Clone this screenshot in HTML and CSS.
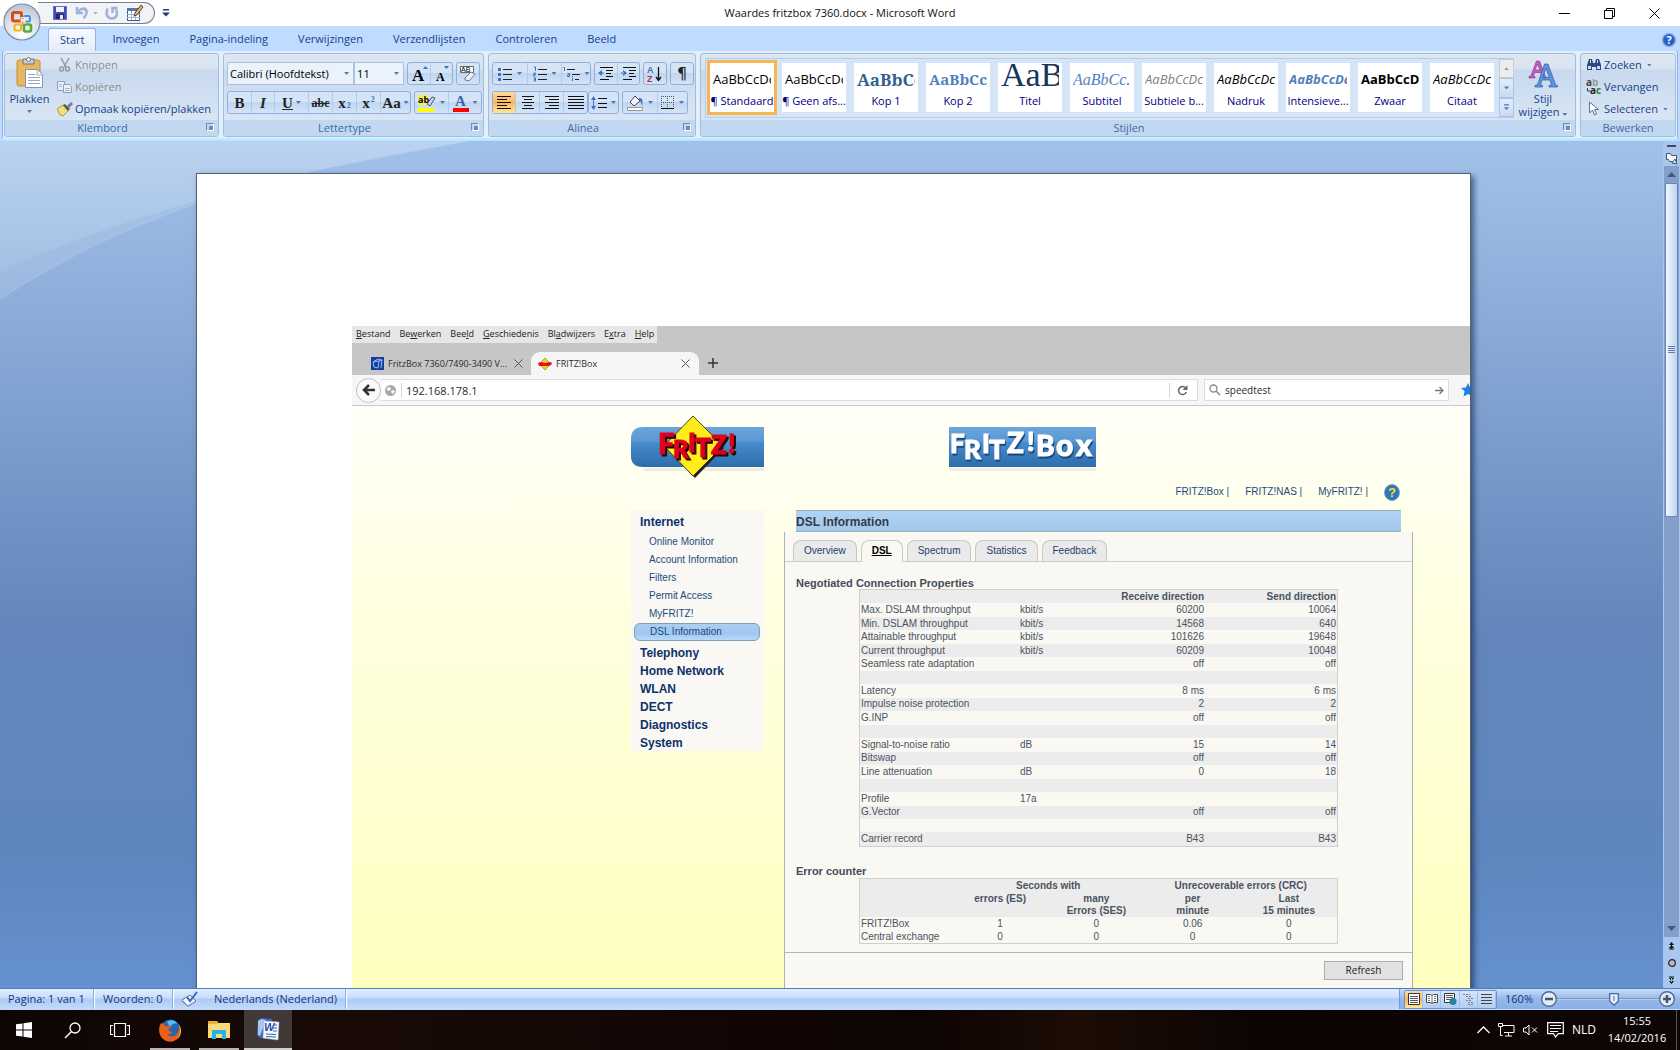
FILE: index.html
```html
<!DOCTYPE html>
<html lang="nl">
<head>
<meta charset="utf-8">
<title>Waardes fritzbox 7360.docx - Microsoft Word</title>
<link rel="stylesheet" href="styles.css">
</head>
<body>
<header class="titlebar">
  <div class="tleft">
    <div class="qat">
      <button aria-label="Opslaan"><svg width="16" height="16"><path d="M1 1h13l1 1v13H1z" fill="#4348b0"/><path d="M4 1h8v6H4z" fill="#eef2ff"/><path d="M4 9h8v6H4z" fill="#23256e"/><path d="M8 10h3v4H8z" fill="#e8ecff"/><path d="M1.500 1.500h13v13h-13z" fill="none" stroke="#6a70d0"/></svg></button>
      <button aria-label="Ongedaan maken"><svg width="16" height="16"><path d="M3 2v6h6" fill="none" stroke="#9fb3d8" stroke-width="2.500"/><path d="M3.500 7.500C6 3.500 11 2 12.500 6c1 3-1 5-3 7" fill="none" stroke="#9fb3d8" stroke-width="2.500"/></svg></button>
      <span class="caret dim"></span>
      <button aria-label="Opnieuw"><svg width="16" height="16"><path d="M3.500 3.500C1 10 4 13.500 8 13.500s6.500-4 4-9M8.500 8V3h5" fill="none" stroke="#9fb3d8" stroke-width="2.500"/></svg></button>
      <button aria-label="Tabel tekenen"><svg width="18" height="18"><path d="M1.500 4.500h12v12h-12z" fill="#fff" stroke="#3d5c94"/><path d="M1 4h13v3H1z" fill="#4f76b8"/><path d="M1 10.500h13M1 13.500h13M5.500 7v9M9.500 7v9" stroke="#9ab4dc"/><path d="M8 12l1-3 6-8 2 2-6 8z" fill="#e9b765" stroke="#5a4630"/></svg></button>
    </div>
    <button class="qatmore" aria-label="Werkbalk aanpassen"><svg width="8" height="8"><path d="M1 0h6v1.500H1zM0 3.500h8L4 7.500z" fill="#223a73"/></svg></button>
  </div>
  <h1>Waardes fritzbox 7360.docx - Microsoft Word</h1>
  <div class="winctl">
    <button aria-label="Minimaliseren"><svg width="11" height="11"><path d="M0 5.500h11" stroke="#000"/></svg></button>
    <button aria-label="Verkleinen"><svg width="11" height="11"><path d="M.5 2.500h8v8h-8zM2.500 2.500v-2h8v8h-2" fill="none" stroke="#000"/></svg></button>
    <button aria-label="Sluiten"><svg width="11" height="11"><path d="M.5.5l10 10m0-10l-10 10" stroke="#000"/></svg></button>
  </div>
  <button class="orb" aria-label="Office-knop"><svg width="38" height="38" viewBox="0 0 38 38"><defs><radialGradient id="o" cx=".5" cy=".85" r=".9"><stop offset="0" stop-color="#fff"/><stop offset=".5" stop-color="#dfe5ee"/><stop offset="1" stop-color="#b3bfce"/></radialGradient></defs><circle cx="19" cy="19" r="18" fill="url(#o)" stroke="#7c8ca3" stroke-width="1.200"/><g fill="none"><rect x="9.500" y="9.500" width="9" height="8.500" rx="1.500" stroke="#dc4d12" stroke-width="3"/><rect x="21" y="13" width="6" height="5.500" rx="1" stroke="#4a94dc" stroke-width="2"/><rect x="11.500" y="21.500" width="6.500" height="6" rx="1" stroke="#f3b51c" stroke-width="2.200"/><rect x="21" y="21.500" width="7" height="7" rx="1.500" stroke="#58a83c" stroke-width="2.600"/></g><path d="M17.500 14h5v7h-5z" fill="#eef1f6"/><path d="M17 15.500h4M19.500 18v5M16.500 20h6" stroke="#e8a060" stroke-width="1.200"/></svg></button>
</header>

<nav class="tabs">
  <button class="tab on">Start</button><button class="tab">Invoegen</button><button class="tab">Pagina-indeling</button><button class="tab">Verwijzingen</button><button class="tab">Verzendlijsten</button><button class="tab">Controleren</button><button class="tab">Beeld</button>
  <button class="help" aria-label="Help"><svg width="14" height="14"><circle cx="7" cy="7" r="6.300" fill="#2460d0" stroke="#86a0d0" stroke-width="1.300"/><text x="7" y="11" text-anchor="middle" font-family="Open Sans" font-size="11" font-weight="700" fill="#fff">?</text></svg></button>
</nav>

<div class="ribbonwrap"><div class="ribbon">
  <section class="group g-clip">
    <div class="gbody">
      <button class="paste"><svg width="28" height="32"><rect x="1" y="3" width="23" height="26" rx="2" fill="#e9b75c" stroke="#c28f3c"/><path d="M7 2h11v5H7z" fill="#c9cdd4" stroke="#70747c"/><circle cx="12.500" cy="2.500" r="2" fill="#fff" stroke="#70747c"/><path d="M9.500 12.500h12l5 5v13h-17z" fill="#fff" stroke="#8795b0"/><path d="M21 12v6h6M12 17.500h7M12 20.500h12M12 23.500h12M12 26.500h12" fill="none" stroke="#9aa9c8"/></svg>Plakken<span class="caret"></span></button>
      <div class="stack">
        <button class="cmd off"><svg width="16" height="16"><path d="M4 1l5 9M12 1L7 10" stroke="#8d99b0" stroke-width="1.500"/><circle cx="4.500" cy="12" r="2" fill="none" stroke="#8d99b0" stroke-width="1.500"/><circle cx="10.500" cy="12" r="2" fill="none" stroke="#8d99b0" stroke-width="1.500"/></svg>Knippen</button>
        <button class="cmd off"><svg width="16" height="16"><path d="M.5 2.500h7v9h-7z" fill="#eaf0fa" stroke="#8f9fbd"/><path d="M6.500 5.500h6l2 2v6h-8z" fill="#eaf0fa" stroke="#8f9fbd"/><path d="M8 9.500h5M8 11.500h5M2 5.500h3M2 7.500h3" stroke="#a8b5cd"/></svg>Kopiëren</button>
        <button class="cmd"><svg width="16" height="16"><path d="M0 8l6-4 5 6-5 5-3-1z" fill="#f0dd80" stroke="#b49637"/><path d="M6 4l2-1 5 5-2 2z" fill="#555a64"/><path d="M10 5l4-4 2 2-4 4z" fill="#6e7d9a"/></svg>Opmaak kopiëren/plakken</button>
      </div>
    </div>
    <footer>Klembord<i class="launch"></i></footer>
  </section>

  <section class="group g-font">
    <div class="gbody rows">
      <div class="row">
        <label class="combo wide"><select aria-label="Lettertype"><option>Calibri (Hoofdtekst)</option></select></label><label class="combo size"><select aria-label="Tekengrootte"><option>11</option></select></label>
        <div class="bar gap3"><button class="w22 ser" aria-label="Groter lettertype"><svg width="18" height="18"><text x="2" y="16" font-size="17">A</text><path d="M13 4l2.500-3L18 4z" fill="#3f6fc4"/></svg></button><button class="w22 ser" aria-label="Kleiner lettertype"><svg width="18" height="18"><text x="3" y="16" font-size="12">A</text><path d="M11 1l2.500 3L16 1z" fill="#3f6fc4"/></svg></button></div>
        <div class="bar gap3"><button class="w22" aria-label="Opmaak wissen"><svg width="18" height="18"><path d="M1.500 1.500h13v6h-13z" fill="#fff" stroke="#667"/><text x="2" y="7" font-size="7" font-family="Liberation Sans">AB</text><path d="M6 13l6-6 4 2-6 7-4-1z" fill="#f2f4fa" stroke="#667799"/></svg></button></div>
      </div>
      <div class="row">
        <div class="bar"><button class="w23 ser"><b>B</b></button><button class="w23 ser"><em>I</em></button><button class="w34 ser"><u>U</u><span class="caret"></span></button><button class="w24 ser sm"><s>abc</s></button><button class="w24 ser">x<sub>2</sub></button><button class="w24 ser">x<sup>2</sup></button><button class="w30 ser">Aa<span class="caret"></span></button></div>
        <div class="bar gap3"><button class="w33" aria-label="Markeren"><svg width="18" height="18"><path d="M0 1h10v10H0z" fill="#f4f05a"/><text x="0" y="9" font-size="9" font-family="Open Sans" font-weight="700">ab</text><path d="M9 10l5-7 3 1-5 8z" fill="#cdd6e8" stroke="#445577"/><path d="M0 14h16v4H0z" fill="#ff0"/></svg><span class="caret"></span></button><button class="w33" aria-label="Tekstkleur"><svg width="16" height="18"><text x="2" y="12" font-size="15" font-family="Liberation Serif" font-weight="700" fill="#3b66b0">A</text><path d="M0 14h16v4H0z" fill="#f00"/></svg><span class="caret"></span></button></div>
      </div>
    </div>
    <footer>Lettertype<i class="launch"></i></footer>
  </section>

  <section class="group g-para">
    <div class="gbody rows">
      <div class="row">
        <div class="bar"><button class="w34" aria-label="Opsommingstekens"><svg width="15" height="16"><path d="M5 3.500h9M5 8.500h9M5 13.500h9" stroke="#222"/><path d="M0 2h3v3H0zM0 7h3v3H0zM0 12h3v3H0z" fill="#3f6fc4"/></svg><span class="caret"></span></button><button class="w34" aria-label="Nummering"><svg width="15" height="16"><path d="M5 3.500h9M5 8.500h9M5 13.500h9" stroke="#222"/><path d="M1 1h1.500v4M.5 7h2v1.500h-2V10h2M.5 12h2v3h-2M1 13.500h1.500" fill="none" stroke="#3f6fc4"/></svg><span class="caret"></span></button><button class="w28" aria-label="Lijst met meerdere niveaus"><svg width="18" height="16"><path d="M4 3.500h8M9 8.500h8M12 13.500h4" stroke="#222"/><path d="M.5 1.500h1V5M4.500 7.500h2v3h-2V9h2M9.500 10v1M9.500 12v3" fill="none" stroke="#3f6fc4"/></svg><span class="caret"></span></button></div>
        <div class="bar gap3"><button class="w22" aria-label="Inspringing verkleinen"><svg width="16" height="14"><path d="M2 .5h13M8 3.500h7M8 6.500h5M8 9.500h7M2 12.500h9" stroke="#111"/><path d="M0 6l4-3v6zM3 5.500h3v1H3z" fill="#3f6fc4"/></svg></button><button class="w22" aria-label="Inspringing vergroten"><svg width="16" height="14"><path d="M2 .5h13M8 3.500h7M8 6.500h5M8 9.500h7M2 12.500h9" stroke="#111"/><path d="M6 6L2 3v6zM0 5.500h3v1H0z" fill="#3f6fc4"/></svg></button></div>
        <div class="bar gap3"><button class="w22" aria-label="Sorteren"><svg width="16" height="18"><g font-size="9" font-family="Liberation Sans" font-weight="700"><text x="0" y="8" fill="#3f6fc4">A</text><text x="0" y="17" fill="#b03434">Z</text></g><path d="M11.500 2v13M9 12l2.500 3.500L14 12" fill="none" stroke="#111" stroke-width="1.300"/></svg></button></div>
        <div class="bar gap3"><button class="w22 pil">¶</button></div>
      </div>
      <div class="row">
        <div class="bar"><button class="w22 hot" aria-label="Links uitlijnen"><svg width="14" height="13"><path d="M0 .5h14M0 3.500h10M0 6.500h14M0 9.500h10M0 12.500h14" stroke="#111"/></svg></button><button class="w24" aria-label="Centreren"><svg width="14" height="13"><path d="M1 .5h12M3 3.500h8M1 6.500h12M3 9.500h8M1 12.500h12" stroke="#111"/></svg></button><button class="w24" aria-label="Rechts uitlijnen"><svg width="14" height="13"><path d="M0 .5h14M4 3.500h10M0 6.500h14M4 9.500h10M0 12.500h14" stroke="#111"/></svg></button><button class="w24" aria-label="Uitvullen"><svg width="16" height="13"><path d="M0 .5h16M0 3.500h16M0 6.500h16M0 9.500h16M0 12.500h16" stroke="#111"/></svg></button></div>
        <div class="bar"><button class="w28" aria-label="Regelafstand"><svg width="16" height="16"><path d="M7 3.500h9M7 8.500h9M7 12.500h9" stroke="#111"/><path d="M0 5l2.500-4L5 5zM0 11l2.500 4L5 11zM2 5h1v6H2z" fill="#3f6fc4"/></svg><span class="caret"></span></button></div>
        <div class="bar gap3"><button class="w34" aria-label="Arcering"><svg width="17" height="17"><path d="M3 8l5-6 5 5-6 5z" fill="#f2f4fa" stroke="#445"/><path d="M12 4c4 0 4 3 3 8-1-3-1-5-3-5z" fill="#3f6fc4"/><path d="M.5 13.500h15v3H.5z" fill="#fff" stroke="#999"/></svg><span class="caret"></span></button><button class="w30" aria-label="Randen"><svg width="14" height="14"><path d="M.5 0v12M6.500 0v12M12.500 0v12M0 .5h13M0 6.500h13" stroke="#555" stroke-dasharray="1 1"/><path d="M0 12.500h13" stroke="#111"/></svg><span class="caret"></span></button></div>
      </div>
    </div>
    <footer>Alinea<i class="launch"></i></footer>
  </section>

  <section class="group g-style">
    <div class="gbody">
      <div class="gallery">
        <button class="cell sel"><span class="s">AaBbCcDc</span>¶ Standaard</button>
        <button class="cell"><span class="s">AaBbCcDc</span>¶ Geen afs...</button>
        <button class="cell"><span class="s k1">AaBbCc</span>Kop 1</button>
        <button class="cell"><span class="s k2">AaBbCc</span>Kop 2</button>
        <button class="cell"><span class="s ti">AaB</span>Titel</button>
        <button class="cell"><span class="s su">AaBbCc.</span>Subtitel</button>
        <button class="cell"><span class="s sb">AaBbCcDc</span>Subtiele b...</button>
        <button class="cell"><span class="s it">AaBbCcDc</span>Nadruk</button>
        <button class="cell"><span class="s in">AaBbCcDc</span>Intensieve...</button>
        <button class="cell"><span class="s zw">AaBbCcDc</span>Zwaar</button>
        <button class="cell"><span class="s it">AaBbCcDc</span>Citaat</button>
        <div class="gscroll"><button class="dis" aria-label="Omhoog"><span class="caret up"></span></button><button aria-label="Omlaag"><span class="caret"></span></button><button aria-label="Meer"><span class="caret more"></span></button></div>
      </div>
      <button class="paste change"><svg width="30" height="30" aria-hidden="true"><path d="M1 19v-1.500l2-.8L8.500 2h3L17 17l1 .8V19h-5v-1.500l1-.5-1-3.500H6.500L5.500 17l1.500.6V19zM7 11h5L9.500 5z" fill="#c45ac0" stroke="#8d3a90" stroke-width=".7"/><path d="M7 28v-1.500l2.500-1L16.500 5h3.500l7.500 20.500 2 1V28H21v-1.500l2.500-.8-1.500-4.700h-8l-1.500 4.700 2 .8V28zM14.800 18.500h6.400L18 9z" fill="#5c93dc" stroke="#2f5ea8" stroke-width=".7"/></svg><span>Stijl<br>wijzigen <span class="caret"></span></span></button>
    </div>
    <footer>Stijlen<i class="launch"></i></footer>
  </section>

  <section class="group g-edit">
    <div class="gbody"><div class="stack">
      <button class="cmd"><svg width="16" height="16"><path d="M1 13V8l2-6h3l1 4h2l1-4h3l2 6v5h-5v-3H6v3z" fill="#2c4a80"/><path d="M2 9h3v3H2zM11 9h3v3h-3zM4 3h1v3H4zM11 3h1v3h-1z" fill="#c9daf2"/></svg>Zoeken<span class="caret"></span></button>
      <button class="cmd"><svg width="16" height="16"><g font-family="Open Sans" font-weight="700" font-size="10"><text x="0" y="7" fill="#444">a<tspan fill="#999">b</tspan></text><text x="4" y="15" fill="#222">a<tspan fill="#1c8a1c">c</tspan></text></g><path d="M1.500 9v3h3" fill="none" stroke="#345"/></svg>Vervangen</button>
      <button class="cmd"><svg width="16" height="16"><path d="M3.500 1v11l3-3 2 5 2-1-2-4.500h4z" fill="#fff" stroke="#5d6f8d"/></svg>Selecteren<span class="caret"></span></button>
    </div></div>
    <footer>Bewerken</footer>
  </section>
</div></div>

<main class="work">
  <svg class="waves" viewBox="0 0 1680 848" preserveAspectRatio="xMinYMin slice" aria-hidden="true"><defs><linearGradient id="w" x1="0" y1="0" x2="0" y2="1"><stop offset="0" stop-color="#bcd2f0"/><stop offset=".6" stop-color="#abc8e9"/><stop offset="1" stop-color="#a6bfe4"/></linearGradient></defs><path d="M0 0H470Q180 48 0 131z" fill="url(#w)"/><path d="M470 0Q180 48 0 131V158Q130 72 300 33z" fill="#fff" opacity=".12"/><path d="M0 158Q130 72 300 33" fill="none" stroke="#b7cfee" opacity=".6"/></svg>
  <div class="desk">
    <article class="page">
      <div class="shot">
        <div class="ffmenu"><nav><a href="#"><u>B</u>estand</a><a href="#">Be<u>w</u>erken</a><a href="#">Bee<u>l</u>d</a><a href="#"><u>G</u>eschiedenis</a><a href="#">Bl<u>a</u>dwijzers</a><a href="#">E<u>x</u>tra</a><a href="#"><u>H</u>elp</a></nav></div>
        <div class="fftabs">
          <div class="fft"><svg width="13" height="13"><path d="M0 0h13v13H0z" fill="#123f9c"/><path d="M2 5l5-3 4 1-1 8M2 5l1 5 4 1 1-7-6 1M8 4l3-1" fill="none" stroke="#9dbcf0"/></svg><span>FritzBox 7360/7490-3490 V...</span><svg class="x" width="9" height="9"><path d="M.5.5l8 8m0-8l-8 8" stroke="#555"/></svg></div>
          <div class="fft act"><svg width="14" height="12"><path d="M7 0l6 6-6 6-6-6z" fill="#f2d21c" stroke="#8a7a20" stroke-width=".6"/><path d="M0 5l3-1 4 1 6-1 1 2-3 2H6L1 8z" fill="#d9141c"/></svg><span>FRITZ!Box</span><svg class="x" width="9" height="9"><path d="M.5.5l8 8m0-8l-8 8" stroke="#555"/></svg></div>
          <button class="plus" aria-label="Nieuw tabblad"><svg width="10" height="10"><path d="M5 0v10M0 5h10" stroke="#333" stroke-width="1.500"/></svg></button>
        </div>
        <div class="ffnav">
          <button class="back" aria-label="Terug"><svg width="14" height="12"><path d="M7 1L2 6l5 5M2 6h11" fill="none" stroke="#333" stroke-width="2.500"/></svg></button>
          <div class="url"><svg width="11" height="11"><circle cx="5.500" cy="5.500" r="5.500" fill="#a8a8a8"/><path d="M2 3l3-1 1 2-2 2-2-1zM7 5l3 1-2 3-2-2z" fill="#fff"/></svg><input aria-label="Adres" value="192.168.178.1"><svg class="rl" width="11" height="11"><path d="M9 3.500A4 4 0 1 0 9.300 7" fill="none" stroke="#666" stroke-width="1.500"/><path d="M10.500 0v5h-5z" fill="#666"/></svg></div>
          <div class="srch"><svg width="12" height="12"><circle cx="4.500" cy="4.500" r="3.500" fill="none" stroke="#888" stroke-width="1.300"/><path d="M7 7l4 4" stroke="#888" stroke-width="1.600"/></svg><input aria-label="Zoeken" value="speedtest"><svg width="9" height="9"><path d="M0 4.500h7M4.500 1l3.500 3.500L4.500 8" fill="none" stroke="#777" stroke-width="1.300"/></svg></div>
          <svg class="star" width="14" height="14"><path d="M7 0l2 4.500 5 .5-3.600 3.300L11.500 13.500 7 11l-4.500 2.500 1.100-5.200L0 5l5-.5z" fill="#1a82e8"/></svg>
        </div>
        <div class="site">
          <div class="brand">
            <svg width="133" height="66" role="img" aria-label="FRITZ!"><defs><linearGradient id="b" x1="0" y1="0" x2="0" y2="1"><stop offset="0" stop-color="#6ba5db"/><stop offset=".35" stop-color="#5a99d5"/><stop offset=".4" stop-color="#478bcb"/><stop offset="1" stop-color="#2d6dab"/></linearGradient></defs><path d="M133 11v40H12Q0 51 0 40V23Q0 11 12 11z" fill="url(#b)"/><path d="M12 52h121v3H14z" fill="#000" opacity=".07"/><path d="M63 2l30 30-29 30-29-30z" fill="#222"/><path d="M62 0l30 30-30 30-29-30z" fill="#ffec1a" stroke="#4a4a10"/><text class="logo red" font-size="26"><tspan x="27" y="38" font-size="29">F</tspan><tspan x="42" y="42" font-size="24">R</tspan><tspan x="57" y="36">I</tspan><tspan x="64" y="41">T</tspan><tspan x="80" y="38">Z</tspan><tspan x="97" y="37">!</tspan></text></svg>
            <svg width="148" height="66" role="img" aria-label="FRITZ!Box"><path d="M1 11h147v40H1z" fill="url(#b)"/><path d="M1 52h147v3H1z" fill="#000" opacity=".06"/><text class="logo white" font-size="26"><tspan x="2" y="37">F</tspan><tspan x="16" y="43">R</tspan><tspan x="34" y="37">I</tspan><tspan x="41" y="43">T</tspan><tspan x="59" y="37" font-size="28">Z</tspan><tspan x="79" y="35">!</tspan><tspan x="88" y="40" font-size="28">B</tspan><tspan x="108" y="40" font-size="30">o</tspan><tspan x="128" y="40" font-size="30">x</tspan></text></svg>
          </div>
          <div class="toplinks"><a href="#">FRITZ!Box |</a><a href="#">FRITZ!NAS |</a><a href="#">MyFRITZ! |</a><a href="#" aria-label="Help"><svg width="16" height="17"><ellipse cx="8" cy="8.500" rx="7.500" ry="8" fill="#2f78b8" stroke="#7ba7cf"/><text x="8" y="13" text-anchor="middle" font-family="Liberation Sans" font-weight="700" font-size="13" fill="#f2e21c">?</text></svg></a></div>
          <div class="cols">
            <nav class="side">
              <a class="h" href="#">Internet</a>
              <a href="#">Online Monitor</a><a href="#">Account Information</a><a href="#">Filters</a><a href="#">Permit Access</a><a href="#">MyFRITZ!</a><a class="cur" href="#">DSL Information</a>
              <a class="h" href="#">Telephony</a><a class="h" href="#">Home Network</a><a class="h" href="#">WLAN</a><a class="h" href="#">DECT</a><a class="h" href="#">Diagnostics</a><a class="h" href="#">System</a>
            </nav>
            <section class="dsl">
              <h2>DSL Information</h2>
              <div class="panel">
                <nav class="ptabs"><a href="#">Overview</a><a class="on" href="#">DSL</a><a href="#">Spectrum</a><a href="#">Statistics</a><a href="#">Feedback</a></nav>
                <h3>Negotiated Connection Properties</h3>
                <table class="props">
                  <colgroup><col class="c1"><col class="c2"><col class="c3"><col class="c4"></colgroup>
                  <tr><th></th><th></th><th>Receive direction</th><th>Send direction</th></tr>
                  <tr><td>Max. DSLAM throughput</td><td>kbit/s</td><td>60200</td><td>10064</td></tr>
                  <tr><td>Min. DSLAM throughput</td><td>kbit/s</td><td>14568</td><td>640</td></tr>
                  <tr><td>Attainable throughput</td><td>kbit/s</td><td>101626</td><td>19648</td></tr>
                  <tr><td>Current throughput</td><td>kbit/s</td><td>60209</td><td>10048</td></tr>
                  <tr><td>Seamless rate adaptation</td><td></td><td>off</td><td>off</td></tr>
                  <tr><td></td><td></td><td></td><td></td></tr>
                  <tr><td>Latency</td><td></td><td>8 ms</td><td>6 ms</td></tr>
                  <tr><td>Impulse noise protection</td><td></td><td>2</td><td>2</td></tr>
                  <tr><td>G.INP</td><td></td><td>off</td><td>off</td></tr>
                  <tr><td></td><td></td><td></td><td></td></tr>
                  <tr><td>Signal-to-noise ratio</td><td>dB</td><td>15</td><td>14</td></tr>
                  <tr><td>Bitswap</td><td></td><td>off</td><td>off</td></tr>
                  <tr><td>Line attenuation</td><td>dB</td><td>0</td><td>18</td></tr>
                  <tr><td></td><td></td><td></td><td></td></tr>
                  <tr><td>Profile</td><td>17a</td><td></td><td></td></tr>
                  <tr><td>G.Vector</td><td></td><td>off</td><td>off</td></tr>
                  <tr><td></td><td></td><td></td><td></td></tr>
                  <tr><td>Carrier record</td><td></td><td>B43</td><td>B43</td></tr>
                </table>
                <h3 class="second">Error counter</h3>
                <table class="errs">
                  <thead>
                    <tr><th></th><th colspan="2">Seconds with</th><th colspan="2">Unrecoverable errors (CRC)</th></tr>
                    <tr><th></th><th>errors (ES)</th><th>many<br>Errors (SES)</th><th>per<br>minute</th><th>Last<br>15 minutes</th></tr>
                  </thead>
                  <tbody>
                    <tr><td>FRITZ!Box</td><td>1</td><td>0</td><td>0.06</td><td>0</td></tr>
                    <tr><td>Central exchange</td><td>0</td><td>0</td><td>0</td><td>0</td></tr>
                  </tbody>
                </table>
                <div class="foot"><button>Refresh</button></div>
              </div>
            </section>
          </div>
        </div>
      </div>
    </article>
  </div>
  <aside class="scroll">
    <i class="split"></i>
    <svg width="13" height="13"><path d="M1.500 1.500h4l1 2h5v7h-4v-1h-3l-1-2h-2z" fill="#f4f6fb" stroke="#4a5670"/><path d="M7 11l3-4 2 5z" fill="#dde6f5" stroke="#4a5670"/></svg>
    <div class="track"><button class="arr" aria-label="Omhoog"><span class="tri up"></span></button><div class="thumb"><i></i></div><button class="arr end" aria-label="Omlaag"><span class="tri"></span></button></div>
    <div class="browse">
      <button aria-label="Vorige pagina"><svg width="7" height="8"><path d="M3.500 0L6 3H1zM3 2h1v5H3zM3.500 3L6 6H1zM1 6.500h5v1H1z" fill="#111"/></svg></button>
      <button aria-label="Bladerobject"><svg width="8" height="8"><circle cx="4" cy="4" r="3.300" fill="#b8b8b8" stroke="#222" stroke-width="1.200"/></svg></button>
      <button aria-label="Volgende pagina"><svg width="7" height="8"><path d="M3.500 8L6 5H1zM3 1h1v5H3zM3.500 5L6 2H1zM1 .5h5v1H1z" fill="#111"/></svg></button>
    </div>
  </aside>
</main>

<footer class="status">
  <span class="s1">Pagina: 1 van 1</span><span class="s2">Woorden: 0</span>
  <span class="s3"><svg width="18" height="17"><path d="M1 9l8-5 6 6-8 5z" fill="#f1f5fc" stroke="#5c6f95"/><path d="M1 9v2l6 5 8-5v-1l-8 5z" fill="#8ba0c8"/><path d="M6 6l3 4 7-9" fill="none" stroke="#2f68c8" stroke-width="2"/></svg>Nederlands (Nederland)</span>
  <div class="zoom">
    <div class="views">
      <button class="hot" aria-label="Afdrukweergave"><svg width="12" height="12"><path d="M.5.5h11v11H.5z" fill="#fff" stroke="#333"/><path d="M2 3.500h8M2 5.500h8M2 7.500h8M2 9.500h8" stroke="#555"/></svg></button>
      <button aria-label="Leesweergave"><svg width="12" height="12"><path d="M.5 1.500h4l1.500 1 1.500-1h4v8h-4L6 10.500l-1.500-1h-4z" fill="#fff" stroke="#444"/><path d="M2 3.500h2M2 5.500h2M2 7.500h2M8 3.500h2M8 5.500h2M8 7.500h2M6 2v9" stroke="#777"/></svg></button>
      <button aria-label="Webweergave"><svg width="13" height="12"><path d="M.5.5h10v9H.5z" fill="#fff" stroke="#333"/><path d="M2 2.500h7M2 4.500h7M2 6.500h7" stroke="#555"/><circle cx="9" cy="8.500" r="3.500" fill="#2d7f9a"/></svg></button>
      <button aria-label="Overzicht"><svg width="11" height="11"><path d="M0 .5h7M3 2.500h6M5 4.500h6M3 6.500h5M5 8.500h6M5 10.500h6" stroke="#778" stroke-dasharray="2 1"/></svg></button>
      <button aria-label="Concept"><svg width="11" height="11"><path d="M0 .5h11M0 3.500h11M0 6.500h11M0 9.500h11" stroke="#445"/></svg></button>
    </div>
    <span class="pct">160%</span>
    <button aria-label="Uitzoomen"><svg width="16" height="16"><circle cx="8" cy="8" r="7.300" fill="#dfeafa" stroke="#56698c" stroke-width="1.400"/><path d="M4 8h8" stroke="#46546e" stroke-width="2.500"/></svg></button>
    <div class="slider"><svg width="10" height="13"><path d="M.7.7h8.600v7.600L5 12.300.7 8.300z" fill="#e6effb" stroke="#466aa4" stroke-width="1.300"/><path d="M5 3v5" stroke="#466aa4"/></svg></div>
    <button aria-label="Inzoomen"><svg width="16" height="16"><circle cx="8" cy="8" r="7.300" fill="#dfeafa" stroke="#56698c" stroke-width="1.400"/><path d="M4 8h8M8 4v8" stroke="#46546e" stroke-width="2.500"/></svg></button>
  </div>
</footer>

<div class="taskbar">
  <button class="tk" aria-label="Start"><svg width="16" height="16"><path d="M0 2.300L6.500 1.400V7.500H0zM7.500 1.200L16 0v7.500H7.500zM0 8.500h6.500v6.100L0 13.700zM7.500 8.500H16V16l-8.500-1.200z" fill="#fff"/></svg></button>
  <button class="tk" aria-label="Zoeken"><svg width="17" height="17"><circle cx="11" cy="6" r="5" fill="none" stroke="#fff" stroke-width="1.300"/><path d="M7.500 9.500L1 16" stroke="#fff" stroke-width="1.500"/></svg></button>
  <button class="tk" aria-label="Taakweergave"><svg width="20" height="15"><path d="M4.500.5h11v13h-11zM3 2.500H.5v9H3M17 2.500h2.500v9H17" fill="none" stroke="#fff" stroke-width="1.200"/></svg></button>
  <button class="tk run first" aria-label="Firefox"><svg width="22" height="23"><circle cx="11.500" cy="10.500" r="10" fill="#2467b0"/><path d="M8 3c3-3 9-2 10 2-3-1-5 0-6 2-2 0-3-2-4-4z" fill="#58bdea"/><path d="M2 4C-1 9-.5 16 4 20c5 4 11 3 14 0 4-4 4-9 2.500-14C20 11 19 15 15.500 17c-4 1-6 0-7-2 3 .5 4.500-.5 5-2-2 0-3-1-4-2 0-2 1-2.500 3-3-2-2-4-1-5.500-.5C5 6.500 4.500 5 4 3.500 3.500 5 3 5 2 4z" fill="#ea5f1a"/><path d="M19.500 5c3 6 1.500 12-2.500 15.500 5-2 7-10 2.500-15.500z" fill="#fcc22c"/></svg></button>
  <button class="tk run" aria-label="Verkenner"><svg width="22" height="18"><path d="M0 0h9l1 2h12v15H0z" fill="#fbdb78"/><path d="M0 0h9l1 2-1 1H0z" fill="#e9b13a"/><path d="M4 9h14v9h-4v-5H8v5H4z" fill="#29b3ec"/></svg></button>
  <button class="tk run cur" aria-label="Word"><svg width="24" height="24"><path d="M2 2l4-2 10 1v18L4 20 1 17z" fill="#3f68b8"/><path d="M2 3l3-2 5 1-6 16-2-1z" fill="#a9c4f0"/><path d="M8 3l15 1-1 18-15-2z" fill="#f6f8fd" stroke="#b5c2dc" stroke-width=".5"/><text x="8" y="13" font-family="Liberation Sans" font-weight="700" font-style="italic" font-size="11" fill="#2a50a4">W</text><path d="M18 7h3M17 10h4M17 13h4M10 16l10 .5M10 18.500l10 .5" stroke="#3a62b4"/></svg></button>
  <div class="tray">
    <svg width="13" height="8"><path d="M.5 7l6-6 6 6" fill="none" stroke="#fff" stroke-width="1.300"/></svg>
    <svg width="17" height="14"><path d="M5 2.500h11v7H6M10.500 10v3M7 13h7M.5.5h4v3h-4zM2.500 4v8.500h2" fill="none" stroke="#fff"/></svg>
    <svg width="16" height="12"><path d="M.5 4H3l3-3v10L3 8H.5zM9 3.500l5 5m0-5l-5 5" fill="none" stroke="#fff"/></svg>
    <svg width="17" height="16"><path d="M.7.7h15.600v11h-5L8.500 15l-2-3.300H.7z" fill="none" stroke="#fff" stroke-width="1.200"/><path d="M3 3.500h11M3 6.500h11M3 9.500h8" stroke="#fff"/></svg>
    <span>NLD</span>
    <time>15:55<br>14/02/2016</time>
  </div>
</div>
</body>
</html>
```
FILE: styles.css
```css
* { box-sizing: border-box; }
body {
  margin: 0; height: 100vh; display: flex; flex-direction: column; overflow: hidden;
  font-family: "Open Sans", "Noto Sans", sans-serif; font-size: 11px; line-height: 16px; color: #15428b;
}
button { font: inherit; color: inherit; background: none; border: 0; padding: 0; margin: 0; }
a { color: inherit; text-decoration: none; }
svg { display: block; flex: none; }
input, select { font: inherit; color: inherit; border: 0; background: none; padding: 0; margin: 0; min-width: 0; appearance: none; outline: 0; }
h1, h2, h3 { margin: 0; font-size: inherit; }

.caret { display: inline-block; flex: none; width: 5px; height: 3px; background: #5877b0; clip-path: polygon(0 0, 100% 0, 50% 100%); }
.caret.dim { background: #a9a9a9; }
.caret.up { clip-path: polygon(50% 0, 100% 100%, 0 100%); background: #999; }
.caret.more { height: 6px; clip-path: polygon(0 0, 100% 0, 100% 20%, 0 20%, 0 50%, 100% 50%, 50% 100%, 0 50%); }

/* title bar */
.titlebar { position: relative; display: grid; grid-template-columns: 1fr auto 1fr; align-items: center; height: 26px; flex: none; background: #fff; }
.tleft { display: flex; align-items: center; }
.qat { display: flex; align-items: center; gap: 6px; margin-left: 38px; padding: 0 10px 0 14px; width: 117px; height: 22px; border: 1px solid #777f8c; border-left: 0; border-radius: 0 11px 11px 0; background: #f1f3f6; }
.qat button { width: 16px; }
.qat .caret { margin-left: -3px; }
.qatmore { margin-left: 7px; }
.titlebar h1 { font-weight: 400; font-size: 11px; color: #111; }
.winctl { display: flex; justify-content: flex-end; gap: 34px; padding-right: 20px; }
.orb { position: absolute; left: 3px; top: 3px; z-index: 3; }

/* ribbon tabs */
.tabs { display: flex; flex: none; height: 25px; padding: 2px 4px 0 48px; background: #bfdbff; margin-bottom: -1px; position: relative; z-index: 1; }
.tab { padding: 0 15px; height: 21px; }
.tab.on { margin-right: 1px; padding: 0 11px; height: 23px; background: linear-gradient(#f6faff, #e4ecf6); border: 1px solid #8db2e3; border-bottom: 0; border-radius: 3px 3px 0 0; }
.help { margin-left: auto; align-self: center; }

.ribbonwrap { flex: none; background: #bfdbff; padding: 0 2px 1px; }
.ribbon { display: flex; gap: 4px; height: 90px; padding: 2px 1px 1px; border: 1px solid #8db2e3; border-bottom: 2px solid #b8f0ff; border-radius: 4px; background: #e4eefa; }
.group { display: flex; flex-direction: column; border: 1px solid #9dbfe0; border-radius: 3px; overflow: hidden; background: linear-gradient(#dde7f2 0, #d9e4f1 18%, #c8d9ee 20%, #d8e5f4 80%); }
.group footer { position: relative; flex: none; height: 16px; line-height: 16px; padding-right: 18px; text-align: center; background: #c1d8f0; color: #3e6aaa; }
.group.g-edit footer { padding-right: 0; }
.gbody { flex: 1; display: flex; min-height: 0; }
.g-clip { width: 215px; }
.g-font { width: 261px; }
.g-para { width: 208px; }
.g-style { flex: 1; }
.g-edit { width: 96px; }
.launch { position: absolute; right: 4px; top: 3px; width: 8px; height: 8px; border: 1px solid #6f8cb8; border-right-color: #fff; border-bottom-color: #fff; }
.launch::after { content: ""; display: block; width: 4px; height: 4px; margin: 2px; background: #6f8cb8; }

.paste { display: flex; flex-direction: column; align-items: center; width: 49px; padding-top: 3px; line-height: 13px; }
.paste svg { margin-bottom: 3px; }
.paste > .caret { margin-top: 5px; }
.stack { display: flex; flex-direction: column; padding-left: 3px; }
.cmd { display: flex; align-items: center; gap: 2px; height: 22px; white-space: nowrap; }
.cmd .caret { margin-left: 3px; }
.off { color: #8d8d8d; }

.rows { flex-direction: column; gap: 6px; padding: 8px 3px 0; }
.row { display: flex; height: 23px; }
.bar { display: flex; border: 1px solid #8fb0dc; border-radius: 3px; background: linear-gradient(#d5e4f7 45%, #c0d6f0 50%, #d3e4f9); }
.bar button { display: flex; align-items: center; justify-content: center; gap: 4px; color: #222; }
.bar button + button { border-left: 1px solid #b3cbea; }
.gap3 { margin-left: 3px; }
.w22 { width: 22px; } .w23 { width: 23px; } .w24 { width: 24px; } .w28 { width: 29px; } .w30 { width: 30px; }
.w33 { width: 33px; } .w34 { width: 34px; }
.bar .ser { gap: 3px; font-family: "Liberation Serif", serif; font-size: 15px; font-weight: 700; }
.bar .ser sup, .bar .ser sub { font-size: 8px; line-height: 8px; color: #3f6fc4; margin: 0 0 0 -2px; }
.bar .ser sup { align-self: flex-start; margin-top: 4px; }
.bar .ser sub { align-self: flex-end; margin-bottom: 3px; }
.bar .sm { font-size: 12px; }
.bar .pil { font-size: 16px; font-family: "DejaVu Sans", sans-serif; }
.hot { background: linear-gradient(#fcd9a4, #fbb65c 50%, #fee79a); }
.combo { position: relative; display: flex; background: #eaf2fb; border: 1px solid #abc1de; color: #000; }
.combo::after { content: ""; position: absolute; right: 4px; top: 9px; width: 5px; height: 3px; background: #5877b0; clip-path: polygon(0 0, 100% 0, 50% 100%); }
.combo select { width: 100%; padding-left: 2px; }
.wide { width: 130px; }
.size { width: 51px; }

.gallery { display: flex; gap: 8px; align-self: flex-start; height: 60px; margin: 4px 0 0 4px; padding: 4px 0 4px 4px; border: 1px solid #b5cdec; background: #d5e4f7; }
.cell { display: flex; flex-direction: column; align-items: center; width: 64px; height: 49px; background: #fff; color: #000080; white-space: nowrap; overflow: hidden; line-height: 14px; }
.cell.sel { outline: 3px solid #f5b652; }
.s { width: 58px; height: 31px; line-height: 33px; font-size: 13px; color: #000; overflow: hidden; text-align: left; flex: none; }
.k1, .k2 { font-family: "Noto Serif", "Liberation Serif", serif; font-weight: 700; font-size: 17px; color: #365f91; }
.k2 { font-size: 15px; color: #4f81bd; }
.ti { font-family: "Liberation Serif", serif; font-size: 34px; line-height: 24px; color: #17365d; }
.su { font-family: "Liberation Serif", serif; font-style: italic; font-size: 16px; color: #4f81bd; }
.sb { font-style: italic; color: #808080; }
.it { font-style: italic; }
.in { font-style: italic; font-weight: 700; color: #4f81bd; }
.zw { font-weight: 700; }
.gscroll { display: flex; flex-direction: column; width: 15px; margin: -4px -1px -4px -3px; }
.gscroll button { flex: 1; display: flex; align-items: center; justify-content: center; border: 1px solid #a9c4e6; background: linear-gradient(#e3edfa, #c8dbf4); }
.gscroll .dis { background: #ececec; border-color: #ccc; }
.change { width: 60px; margin-left: -1px; padding-top: 5px; }
.change > span { white-space: nowrap; }
.g-edit .stack { padding-left: 5px; }

/* document area */
.work { position: relative; flex: 1; min-height: 0; display: flex; overflow: hidden; background: linear-gradient(#a2c1ea, #8fafda 18%, #7b9dcd 35%, #6286bb 58%, #5e87bf 85%, #6591cf); }
.waves { position: absolute; left: 0; top: 0; width: 100%; height: 100%; }
.desk { position: relative; flex: 1; min-width: 0; padding: 32px 192px 0 196px; }
.page { min-height: 100%; padding: 152px 0 0 155px; background: #fff; border: 1px solid #56606e; border-bottom: 0; box-shadow: 3px 3px 6px rgba(10, 30, 70, .6); }
.shot { overflow: hidden; color: #2b2b2b; }
.ffmenu { height: 17px; background: #c6c6c6; display: flex; }
.ffmenu nav { display: flex; gap: 9px; padding: 0 4px; width: 305px; background: #e6e6e6; font-size: 9px; white-space: nowrap; line-height: 16px; color: #222; }
.fftabs { display: flex; align-items: flex-end; height: 32px; background: #c6c6c6; font-size: 9px; }
.fft { display: flex; align-items: center; gap: 4px; height: 23px; width: 179px; padding: 0 8px 0 19px; white-space: nowrap; }
.fft .x { margin-left: auto; }
.fft.act { width: 168px; padding: 0 9px 0 7px; background: #f6f6f6; border-radius: 9px 9px 0 0; }
.plus { margin: 0 0 7px 9px; }
.ffnav { display: flex; align-items: center; height: 31px; padding-left: 4px; background: #f6f6f6; border-bottom: 1px solid #c9c9c9; }
.back { display: flex; align-items: center; justify-content: center; width: 25px; height: 25px; border: 1px solid #c0c0c0; border-radius: 50%; background: #fbfbfb; }
.url, .srch { display: flex; align-items: center; height: 22px; background: #fff; border: 1px solid #dcdcdc; }
.url { flex: 1; border-left: 0; padding: 0 9px 0 4px; }
.url input { flex: 1; margin-left: 5px; padding-left: 4px; border-left: 1px solid #d5d5d5; line-height: 15px; }
.url .rl { box-sizing: content-box; padding: 2px 0 2px 7px; border-left: 1px solid #d5d5d5; }
.srch { width: 245px; margin: 0 12px 0 6px; padding: 0 4px; }
.srch input { flex: 1; margin-left: 4px; font-size: 10px; }
.star { margin-right: -5px; }
.site { padding: 10px 57px 0 279px; height: 583px; background: linear-gradient(#fffff8, #ffffe0 35%, #feffbe); font-family: "Liberation Sans", Arial, sans-serif; color: #4a5360; }
.brand { display: flex; gap: 184px; height: 66px; }
.logo { font-family: Lato, sans-serif; font-weight: 900; }
.red { fill: #e2001a; stroke: #e2001a; filter: drop-shadow(2px 2px 0 #200808); }
.white { fill: #fff; stroke: #fff; filter: drop-shadow(1px 2px 0 #174a80); }
.toplinks { display: flex; justify-content: flex-end; align-items: center; gap: 16px; height: 20px; padding-right: 13px; font-size: 10px; color: #1e4a80; }
.cols { display: flex; gap: 20px; margin-top: 8px; }
.side { width: 133px; height: 241px; padding: 3px 0 0; background: #f9f8f4; font-size: 10px; color: #1e4a80; }
.side a { display: block; height: 18px; line-height: 18px; padding-left: 18px; }
.side .h { padding-left: 9px; font-weight: 700; font-size: 12px; color: #0d3268; }
.side .h:first-child { height: 20px; }
.side .cur { margin: 0 4px 3px 3px; padding-left: 15px; line-height: 16px; border: 1px solid #7f9fae; border-radius: 6px; background: linear-gradient(#a9cff2, #9fc7f0 60%, #b9d9f8); }
.dsl { flex: 1; min-width: 0; }
.dsl h2 { margin: 0 12px; height: 22px; line-height: 22px; font-size: 12px; color: #333b46; background: linear-gradient(#b0d4f5, #a3c7e9); border: solid #93afb8; border-width: 1px 0; }
.panel { background: #f9f8f3; border: solid #a3b5b5; border-width: 0 1px; height: 460px; }
.ptabs { display: flex; gap: 4px; height: 30px; padding: 8px 0 0 8px; border-bottom: 1px solid #ccc; }
.ptabs a { height: 21px; line-height: 20px; padding: 0 10px; background: #eaeaea; border: 1px solid #c8c8c8; border-bottom: 0; border-radius: 8px 8px 0 0; color: #1e3f6e; font-size: 10px; }
.ptabs .on { height: 22px; background: #f9f8f3; color: #000; font-weight: 700; text-decoration: underline; }
.panel h3 { padding-left: 11px; margin-top: 14px; height: 14px; line-height: 14px; font-size: 11px; color: #454d58; }
table { width: calc(100% - 148px); margin-left: 74px; border-collapse: separate; border-spacing: 0; table-layout: fixed; border: 1px solid #cfd0cc; font-size: 10px; line-height: 12px; }
td, th { padding: 0 1px; height: 13px; }
.props { height: 258px; margin-top: -1px; }
.props tr:nth-child(odd) { background: #ececec; }
.c1 { width: 159px; } .c2 { width: 60px; } .c3 { width: 126px; }
.props :is(td, th):nth-child(n+3) { text-align: right; }
.panel .second { margin-top: 17px; }
.errs { text-align: center; }
.errs th:first-child { width: 92px; }
.errs td:first-child { text-align: left; }
.errs thead { background: #ececec; }
.errs th { vertical-align: top; padding-top: 1px; }
.foot { display: flex; justify-content: flex-end; margin-top: 8px; padding: 8px 9px 0 0; border-top: 1px solid #a9bcbc; }
.foot button { width: 79px; height: 19px; line-height: 17px; background: #e1e1e1; border: 1px solid #adadad; font-family: "Open Sans", sans-serif; font-size: 10px; color: #222; }

.scroll { position: relative; width: 17px; display: flex; flex-direction: column; align-items: center; padding-top: 4px; background: #a8c6ee; }
.split { width: 9px; height: 2px; margin-bottom: 5px; background: #3c4a68; }
.track { flex: 1; width: 15px; display: flex; flex-direction: column; margin-top: 1px; background: #839fca; }
.arr { height: 17px; display: flex; align-items: center; justify-content: center; }
.end { margin-top: auto; }
.tri { width: 9px; height: 5px; background: #44597f; clip-path: polygon(0 0, 100% 0, 50% 100%); }
.tri.up { clip-path: polygon(50% 0, 100% 100%, 0 100%); }
.thumb { height: 334px; margin: 0 1px; border: 1px solid #6a86b6; border-radius: 2px; background: linear-gradient(90deg, #f4f8fe, #d8e5f7 50%, #bdd2ef); display: flex; align-items: center; justify-content: center; }
.thumb i { width: 7px; height: 8px; background: repeating-linear-gradient(#5f7cae 0 1px, transparent 1px 2px); }
.browse { height: 51px; display: flex; flex-direction: column; justify-content: space-around; align-items: center; }

.status { flex: none; display: flex; align-items: flex-start; height: 22px; border-top: 1px solid #4f7dbb; background: linear-gradient(#e0edff 0, #cadefb 40%, #aecbf5 50%, #c5dbfa); color: #15327f; }
.status > span { display: flex; align-items: center; height: 20px; border-right: 1px solid #8aaede; box-shadow: 1px 0 #fff; }
.s1 { width: 94px; padding-left: 8px; }
.s2 { width: 79px; padding-left: 9px; }
.s3 { width: 173px; padding-left: 8px; gap: 15px; }
.zoom { margin-left: auto; display: flex; align-items: center; height: 20px; padding: 0 5px 0 4px; border-left: 1px solid #6f9ade; background: linear-gradient(#c8dcf8, #95b8ea 50%, #8ab0e6); }
.views { display: flex; width: 93px; height: 19px; border: 1px solid #6a92d0; border-radius: 2px; background: linear-gradient(#d5e5fb, #b2cdf2); }
.views button { flex: 1; display: flex; align-items: center; justify-content: center; border-right: 1px solid #a3c0ea; }
.pct { width: 44px; text-align: center; }
.slider { display: flex; justify-content: center; width: 102px; background: linear-gradient(#5578b0, #dce9fb) center / 100% 2px no-repeat; padding-left: 12px; }

.taskbar { flex: none; display: flex; height: 40px; background: linear-gradient(90deg, #0d0504, #190a06 20%, #0e0404 55%, #1c0c04 64%, #0c0403 75%, #0e0505); color: #fff; }
.tk { width: 48px; display: flex; align-items: center; justify-content: center; }
.run { margin-right: 1px; background: linear-gradient(#b9b5b3, #b9b5b3) center bottom / 40px 2px no-repeat; }
.run.first { margin-left: 2px; }
.run.cur { background: linear-gradient(#d2d0cf, #d2d0cf) center bottom / 100% 2px no-repeat #413938; }
.tray { margin-left: auto; display: flex; align-items: center; gap: 8px; padding-right: 3px; font-size: 12px; }
.tray time { box-sizing: content-box; width: 66px; height: 38px; padding: 2px 6px 0 0; border-right: 1px solid #555; font-size: 11px; line-height: 17px; text-align: center; }
```
